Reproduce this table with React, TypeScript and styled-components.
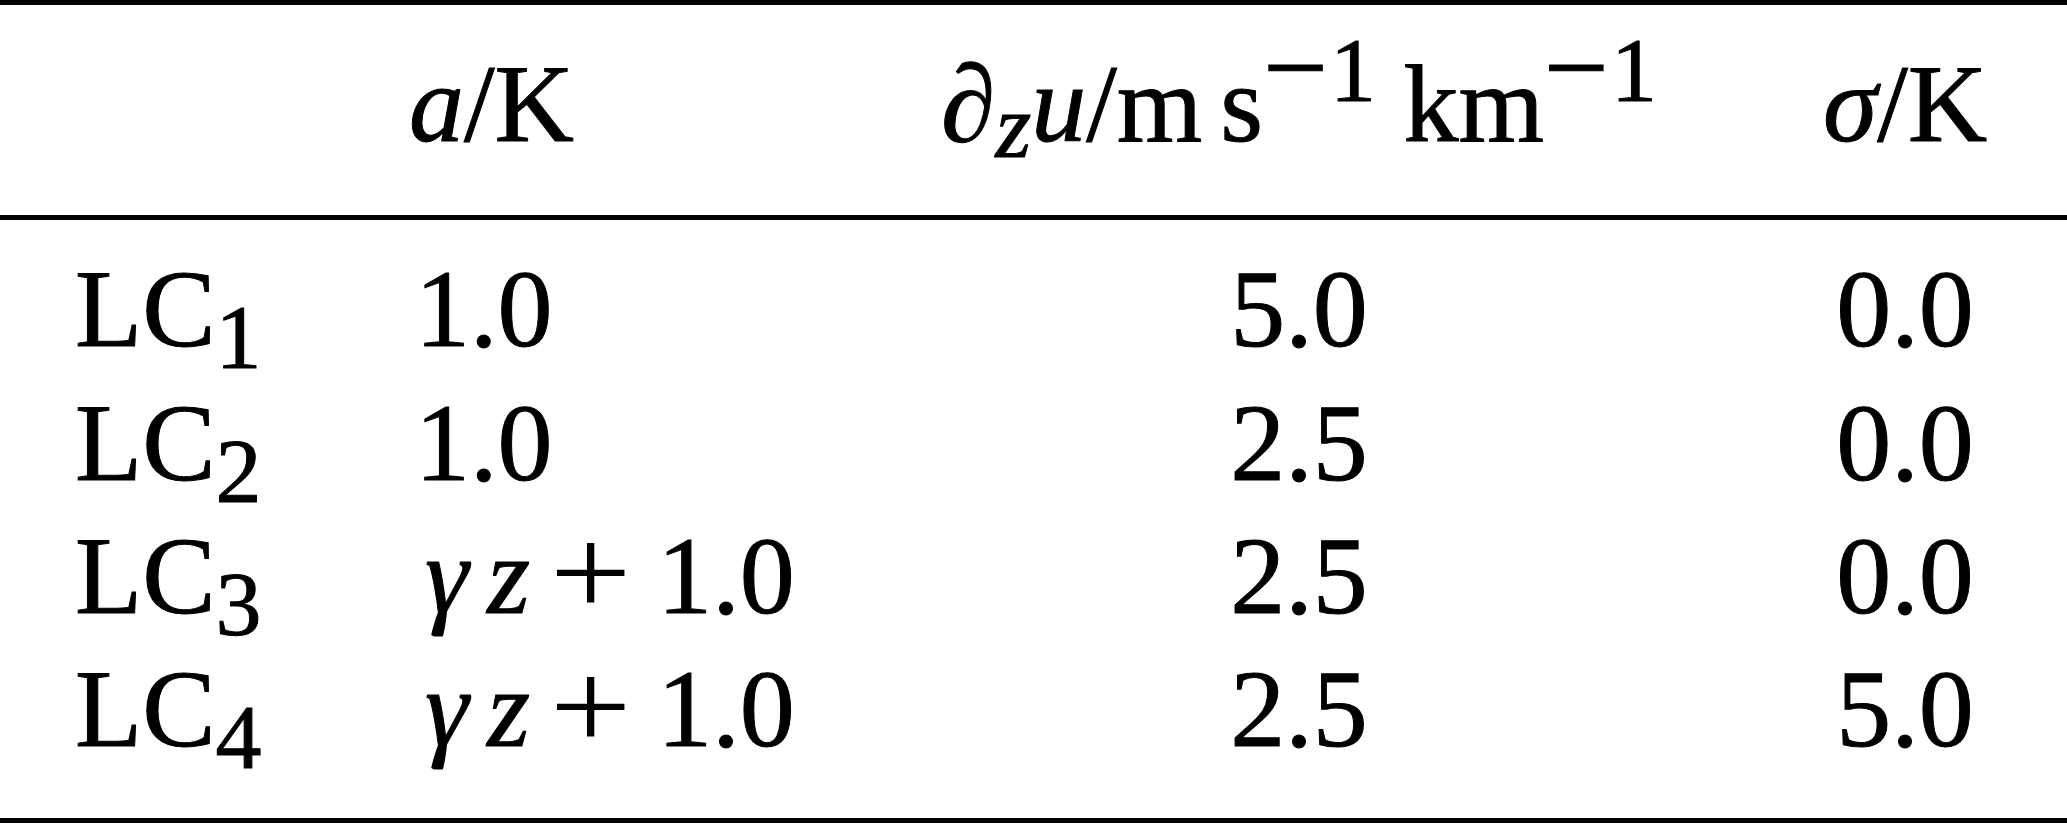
import React from 'react';
import styled, { createGlobalStyle } from 'styled-components';

const GlobalStyle = createGlobalStyle`
  html, body { margin: 0; padding: 0; background: #ffffff; }
  body {
    font-family: "Liberation Serif", "Times New Roman", serif;
    color: #000000;
  }
`;

const Table = styled.div`
  width: 2067px;
  border-top: 5px solid #000;
  border-bottom: 5px solid #000;
  font-size: 110px;
  line-height: 133.33px;
  -webkit-text-stroke: 1px #000;
`;

const Grid = styled.div`
  display: grid;
  grid-template-columns: 409px 446px 888px 324px;
`;

const HeaderRow = styled(Grid)`
  box-sizing: border-box;
  height: 215px;
  padding-top: 33.4px;
  border-bottom: 5px solid #000;
`;

const Body = styled.div`
  padding: 23.4px 0 41.3px;
`;

const BodyRow = styled(Grid)`
  height: 133.33px;
`;

const Cell = styled.div<{ $align?: 'left' | 'center'; $indent?: number }>`
  text-align: ${p => p.$align ?? 'left'};
  padding-left: ${p => p.$indent ?? 0}px;
  white-space: nowrap;
`;

const V = styled.span`
  font-style: italic;
`;

const Sup = styled.span`
  font-size: 92px;
  line-height: 0;
  vertical-align: 40px;
`;

const Sub = styled.span<{ $drop?: number }>`
  font-size: 92px;
  line-height: 0;
  vertical-align: -${p => p.$drop ?? 22}px;
`;

const Minus = styled.span`
  font-size: 115px;
  line-height: 0;
  vertical-align: -5px;
  margin-right: 2px;
`;

const Plus = styled.span`
  display: inline-block;
  font-size: 126px;
  line-height: 0;
  vertical-align: -2.4px;
  margin: 0 31px 0 25px;
  transform: scaleX(1.15);
  -webkit-text-stroke: 0;
`;

const Gap = styled.span<{ $w: number }>`
  display: inline-block;
  width: ${p => p.$w}px;
`;

type Row = { n: string; a: React.ReactNode; du: string; s: string };

const gammaZ = (
  <>
    <Gap $w={10} />
    <V>γ</V>
    <Gap $w={19} />
    <V>z</V>
    <Plus>+</Plus>1.0
  </>
);

const rows: Row[] = [
  { n: '1', a: '1.0', du: '5.0', s: '0.0' },
  { n: '2', a: '1.0', du: '2.5', s: '0.0' },
  { n: '3', a: gammaZ, du: '2.5', s: '0.0' },
  { n: '4', a: gammaZ, du: '2.5', s: '5.0' },
];

const inverse = (
  <Sup>
    <Minus>−</Minus>1
  </Sup>
);

export default function App() {
  return (
    <>
      <GlobalStyle />
      <Table>
        <HeaderRow>
          <Cell $indent={75} />
          <Cell>
            <V>a</V>/K
          </Cell>
          <Cell $align="center">
            ∂<Sub $drop={16}><V>z</V></Sub>
            <V>u</V>/m<Gap $w={18} />s{inverse} km{inverse}
          </Cell>
          <Cell $align="center">
            <V>σ</V>/K
          </Cell>
        </HeaderRow>
        <Body>
          {rows.map(r => (
            <BodyRow key={r.n}>
              <Cell $indent={75}>
                LC<Sub>{r.n}</Sub>
              </Cell>
              <Cell $indent={6}>{r.a}</Cell>
              <Cell $align="center">{r.du}</Cell>
              <Cell $align="center">{r.s}</Cell>
            </BodyRow>
          ))}
        </Body>
      </Table>
    </>
  );
}
